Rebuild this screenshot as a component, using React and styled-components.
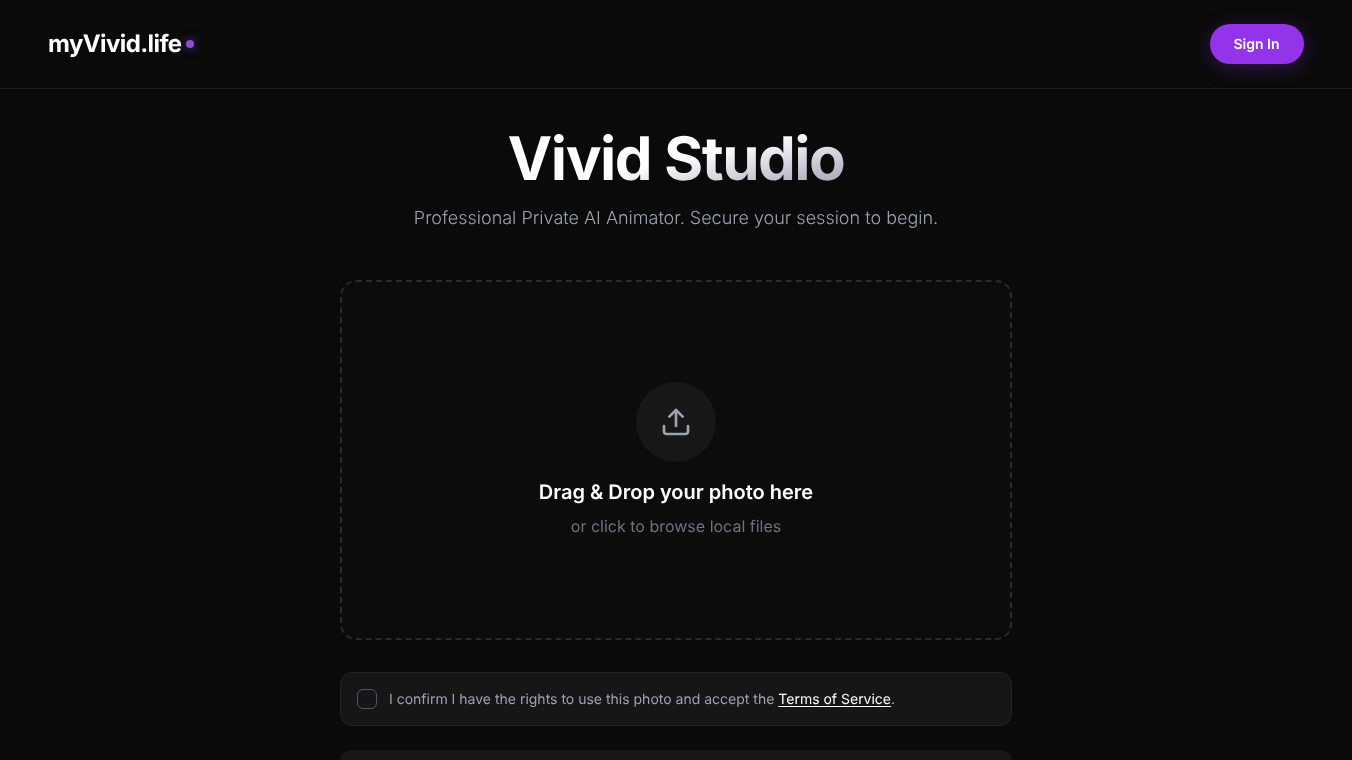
import React from "react";
import styled, { createGlobalStyle } from "styled-components";
import { Upload } from "lucide-react";

const Global = createGlobalStyle`
  html, body { margin: 0; padding: 0; background: #0a0a0a; }
  body { font-family: Inter, "Liberation Sans", sans-serif; color: #fff; text-rendering: geometricPrecision; }
  * { box-sizing: border-box; }
`;

const Header = styled.header`
  display: flex;
  align-items: center;
  justify-content: space-between;
  height: 89px;
  padding: 0 48px;
  border-bottom: 1px solid #1c1c1c;
  will-change: transform;
`;

const Logo = styled.div`
  display: flex;
  align-items: center;
  gap: 4px;
  font-size: 24px;
  line-height: 24px;
  font-weight: 700;
  letter-spacing: -0.025em;
  color: #fff;
`;

const Dot = styled.span`
  width: 8px;
  height: 8px;
  border-radius: 50%;
  background: #8f4cd8;
  box-shadow: 0 0 10px rgba(147, 51, 234, 0.7);
`;

const SignIn = styled.button`
  width: 94px;
  height: 40px;
  padding: 2px 1px 0 0;
  border: 0;
  border-radius: 20px;
  background: #9333ea;
  color: #fff;
  font: 600 14px/20px Inter, sans-serif;
  text-rendering: geometricPrecision;
  box-shadow: 0 4px 20px rgba(147, 51, 234, 0.3);
`;

const Main = styled.main`
  width: 672px;
  margin: 0 auto;
  padding-top: 32px;
  will-change: transform;
`;

const Title = styled.h1`
  width: fit-content;
  margin: 0 auto;
  font-size: 60px;
  line-height: 76px;
  font-weight: 700;
  letter-spacing: -0.025em;
  background: linear-gradient(to bottom right, #fff 50%, #9090a4 100%);
  -webkit-background-clip: text;
  background-clip: text;
  color: transparent;
`;

const Subtitle = styled.p`
  margin: 8px 0 0;
  font-size: 18px;
  line-height: 28px;
  font-weight: 300;
  text-align: center;
  color: #9ca3af;
`;

const Drop = styled.div`
  display: flex;
  flex-direction: column;
  align-items: center;
  justify-content: center;
  height: 360px;
  margin-top: 47px;
  border: 2px dashed #2a2a2a;
  border-radius: 16px;
  background: #0c0c0c;
`;

const IconCircle = styled.div`
  display: flex;
  align-items: center;
  justify-content: center;
  width: 80px;
  height: 80px;
  border-radius: 50%;
  background: #171717;
  color: #9ca3af;
  margin-bottom: 16px;
`;

const DropTitle = styled.div`
  font-size: 20px;
  line-height: 28px;
  font-weight: 600;
  color: #fff;
`;

const DropHint = styled.div`
  margin-top: 8px;
  font-size: 16px;
  line-height: 24px;
  color: #6b7280;
`;

const Consent = styled.label`
  display: flex;
  align-items: center;
  gap: 12px;
  height: 54px;
  margin-top: 32px;
  padding: 0 16px;
  border: 1px solid #232323;
  border-radius: 12px;
  background: #161616;
  font-size: 14px;
  color: #9ca3af;
`;

const Box = styled.span`
  width: 20px;
  height: 20px;
  border: 1px solid #4b5563;
  border-radius: 6px;
`;

const Terms = styled.a`
  color: #fff;
  text-decoration: underline;
  text-underline-offset: 2px;
`;

const Action = styled.button`
  display: block;
  width: 100%;
  height: 56px;
  margin: 24px 0 48px;
  border: 0;
  border-radius: 12px;
  background: #171717;
`;

export default function App() {
  return (
    <>
      <Global />
      <Header>
        <Logo>myVivid.life<Dot /></Logo>
        <SignIn>Sign In</SignIn>
      </Header>
      <Main>
        <Title>Vivid Studio</Title>
        <Subtitle>Professional Private AI Animator. Secure your session to begin.</Subtitle>
        <Drop>
          <IconCircle><Upload size={32} strokeWidth={2} /></IconCircle>
          <DropTitle>Drag &amp; Drop your photo here</DropTitle>
          <DropHint>or click to browse local files</DropHint>
        </Drop>
        <Consent>
          <Box />
          <span>I confirm I have the rights to use this photo and accept the <Terms>Terms of Service</Terms>.</span>
        </Consent>
        <Action />
      </Main>
    </>
  );
}
